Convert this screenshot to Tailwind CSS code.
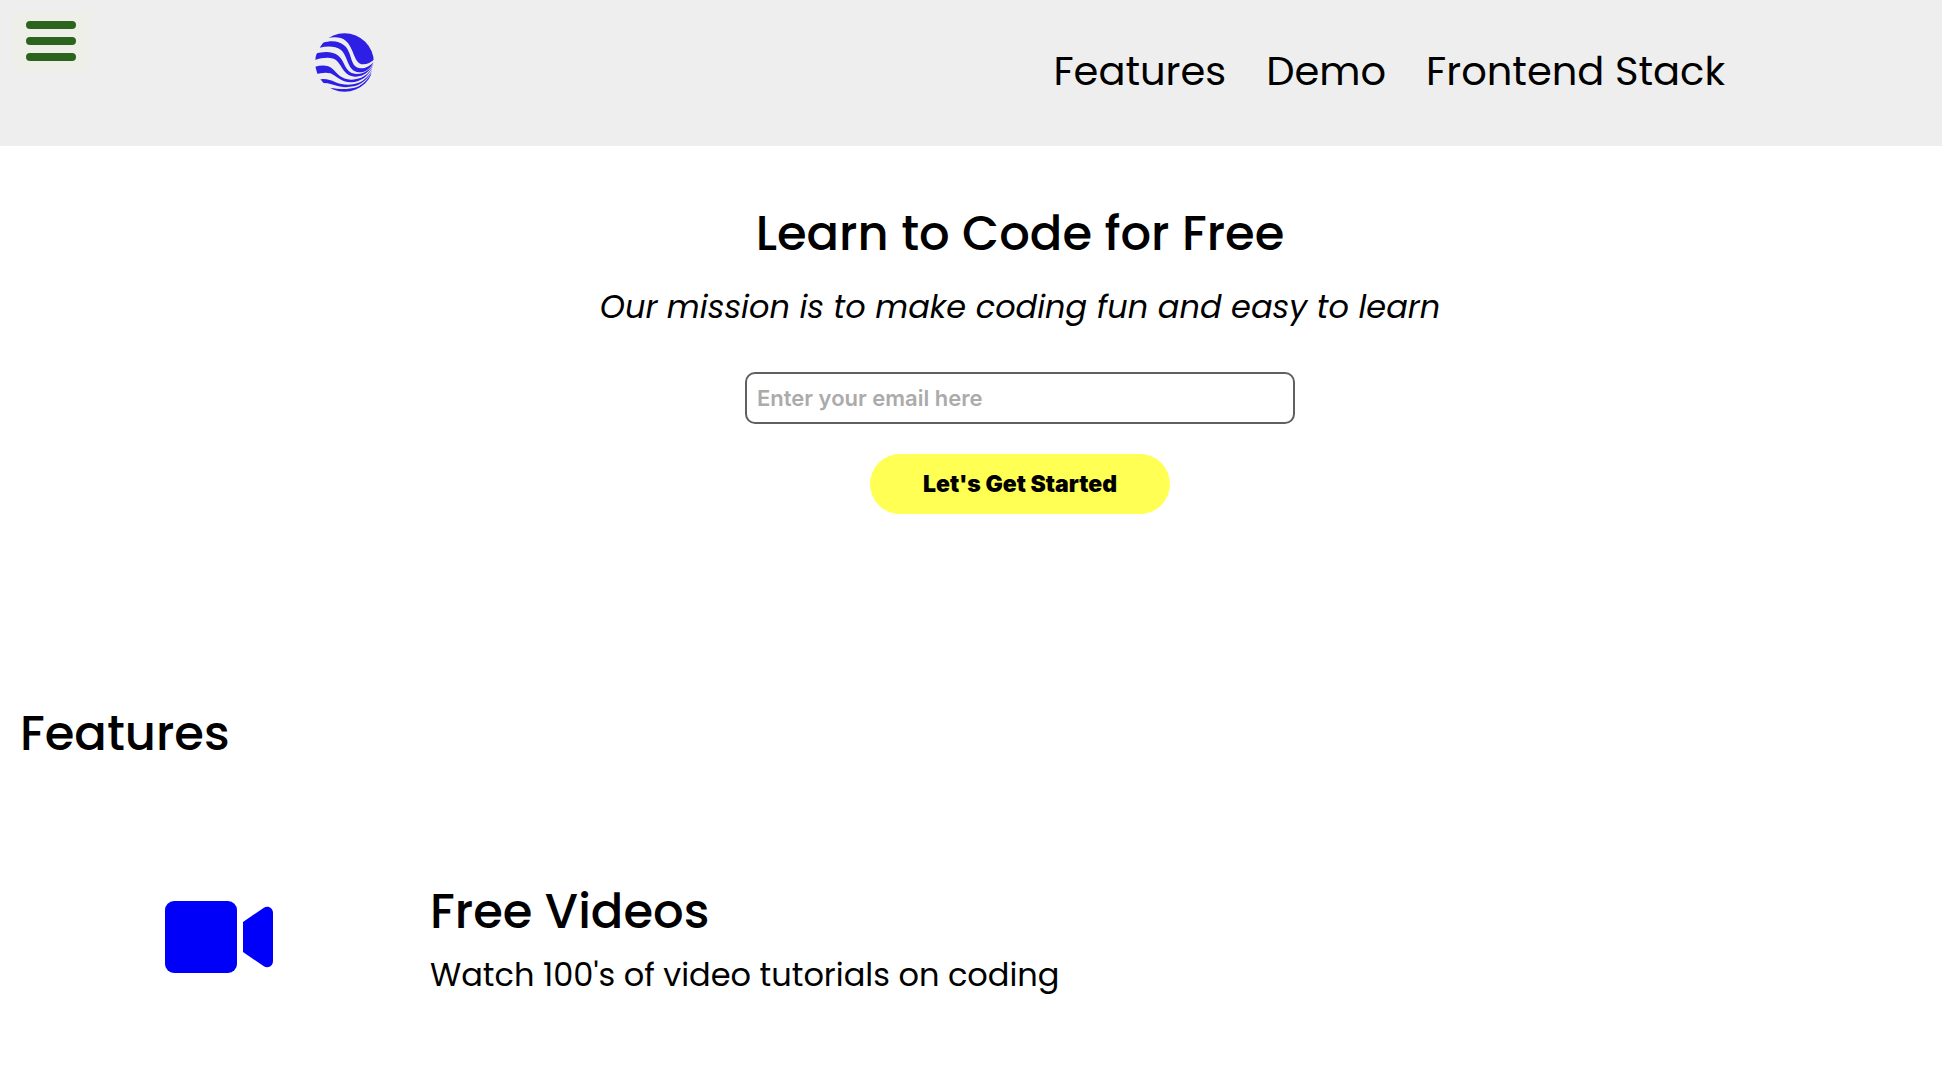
<!DOCTYPE html>
<html lang="en">
<head>
<meta charset="utf-8">
<meta name="viewport" content="width=device-width, initial-scale=1">
<title>Learn to Code for Free</title>
<script src="https://cdn.jsdelivr.net/npm/@tailwindcss/browser@4"></script>
</head>
<body class="bg-white text-black font-['Poppins','Inter',sans-serif]">
<header class="relative flex h-[146px] items-center justify-between bg-[#eeeeee] pr-[217px] pl-[315px]">
  <button type="button" aria-label="Open menu" class="absolute top-3 left-3 flex h-[58px] w-[78px] flex-col items-center justify-center gap-2 bg-[#eeefe9]">
    <span class="h-2 w-[50px] rounded-full bg-[#2b641c]"></span>
    <span class="h-2 w-[50px] rounded-full bg-[#2b641c]"></span>
    <span class="h-2 w-[50px] rounded-full bg-[#2b641c]"></span>
  </button>
  <a href="#" aria-label="Home" class="mb-[22px]">
    <svg class="size-[59px]" viewBox="46 39 177 177" aria-hidden="true">
      <defs><clipPath id="disc"><circle cx="134.500" cy="127.500" r="88"/></clipPath></defs>
      <g clip-path="url(#disc)" fill="#2d1fe4">
        <path d="M80 54C105 50 124 50 138 62C164 84 162 132 190 133C204 133 214 127 223 119L230 30H80Z"/>
        <path d="M70 68C96 60 120 62 136 78C160 103 150 144 184 145C200 145 212 137 222 125C213 145 197 158 178 157C142 154 146 108 124 90C106 77 82 78 60 83Z"/>
        <path d="M46 102C72 93 100 94 116 107C138 125 134 160 172 162C194 162 211 150 222 130C212 155 190 171 166 170C126 166 128 128 102 116C86 111 64 113 44 121Z"/>
        <path d="M44 141C66 134 86 135 98 146C114 160 124 178 154 179C184 180 208 163 220 139C209 166 184 187 154 187C124 187 108 166 92 160C78 156 62 159 44 164Z"/>
        <path d="M56 179C76 174 92 180 106 186C122 193 142 196 160 193C188 188 207 170 218 149C208 173 189 193 162 199C142 203 122 202 106 196C92 190 76 188 60 188Z"/>
        <path d="M68 204C84 201 104 205 122 207C140 208 156 206 170 202C190 194 205 178 215 159L212 180L160 220H68Z"/>
      </g>
    </svg>
  </a>
  <nav class="mb-1 flex gap-10 text-[40px] leading-[60px]">
    <a href="#features">Features</a>
    <a href="#demo">Demo</a>
    <a href="#stack">Frontend Stack</a>
  </nav>
</header>
<main>
  <section class="flex flex-col items-center pt-[52px] pl-[98px] text-center">
    <h1 class="text-[48px] leading-[72px] font-medium">Learn to Code for Free</h1>
    <p class="mt-[13px] text-[32px] leading-[48px] italic">Our mission is to make coding fun and easy to learn</p>
    <form class="mt-[41px] flex flex-col items-center gap-[30px] font-['Inter',sans-serif]">
      <input type="email" aria-label="Email" placeholder="Enter your email here" class="h-[52px] w-[550px] rounded-[10px] border-2 border-[#5f6062] px-[10px] text-[22px] font-semibold placeholder:text-[#ababab]">
      <button type="button" class="h-[60px] w-[300px] rounded-full bg-[#ffff54] text-[23px] font-black">Let's Get Started</button>
    </form>
  </section>
  <section id="features" class="pt-[184px] pl-5">
    <h2 class="text-[48px] leading-[72px] font-medium">Features</h2>
    <div class="mt-[106px] flex pl-[145px]">
      <svg class="mt-[25px] mr-[157px] h-[72px] w-[108px] shrink-0" viewBox="0 0 108 72" fill="#0000fa" aria-hidden="true">
        <rect width="72" height="72" rx="9"/>
        <path d="M78 21L98.500 7C103 4 108 7 108 12V60C108 65 103 68 98.500 65L78 51Z"/>
      </svg>
      <div>
        <h3 class="text-[48px] leading-[72px] font-medium">Free Videos</h3>
        <p class="mt-[3px] text-[32px] leading-[48px]">Watch 100's of video tutorials on coding</p>
      </div>
    </div>
  </section>
</main>
</body>
</html>
